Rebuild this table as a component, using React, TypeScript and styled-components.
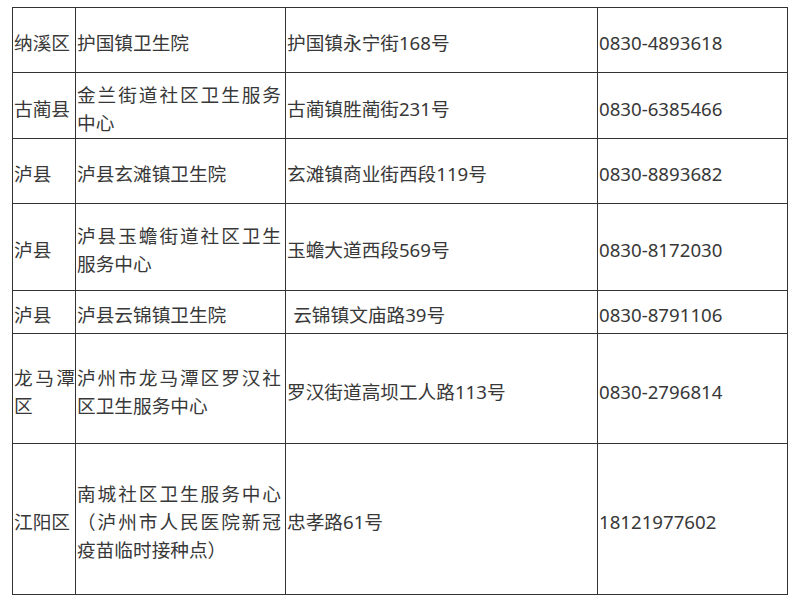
import React from "react";
import styled, { createGlobalStyle } from "styled-components";

const Global = createGlobalStyle`
  html, body { margin: 0; padding: 0; background: #fff; }
  body { font-family: "Noto Sans", "Noto Sans CJK SC", sans-serif; }
`;

const Page = styled.div`
  padding: 7px 0 0 12px;
`;

const Table = styled.table`
  border-collapse: collapse;
  table-layout: fixed;
  width: 776px;
  color: #383838;
  font-size: 18.67px;
  line-height: 28px;
`;

const Col = styled.col<{ $w: number }>`
  width: ${(p) => p.$w}px;
`;

const Row = styled.tr<{ $h: number }>`
  height: ${(p) => p.$h}px;
`;

const Cell = styled.td<{ $pr?: number }>`
  border: 1px solid #333;
  padding: 6px ${(p) => p.$pr ?? 2}px 0 1px;
  vertical-align: middle;
  text-align: justify;
  word-break: break-all;
  overflow: hidden;
`;

type R = { h: number; a: string; b: string; c: string; d: string };

const widths = [63, 210, 312, 190];

const rows: R[] = [
  { h: 65, a: "纳溪区", b: "护国镇卫生院", c: "护国镇永宁街168号", d: "0830-4893618" },
  { h: 66, a: "古蔺县", b: "金兰街道社区卫生服务中心", c: "古蔺镇胜蔺街231号", d: "0830-6385466" },
  { h: 65, a: "泸县", b: "泸县玄滩镇卫生院", c: "玄滩镇商业街西段119号", d: "0830-8893682" },
  { h: 87, a: "泸县", b: "泸县玉蟾街道社区卫生服务中心", c: "玉蟾大道西段569号", d: "0830-8172030" },
  { h: 43, a: "泸县", b: "泸县云锦镇卫生院", c: "\u2004云锦镇文庙路39号", d: "0830-8791106" },
  { h: 110, a: "龙马潭区", b: "泸州市龙马潭区罗汉社区卫生服务中心", c: "罗汉街道高坝工人路113号", d: "0830-2796814" },
  {
    h: 151,
    a: "江阳区",
    b: "南城社区卫生服务中心（泸州市人民医院新冠疫苗临时接种点）",
    c: "忠孝路61号",
    d: "18121977602",
  },
];

export default function App() {
  return (
    <>
      <Global />
      <Page>
        <Table>
          <colgroup>
            {widths.map((w, i) => (
              <Col key={i} $w={w} />
            ))}
          </colgroup>
          <tbody>
            {rows.map((r, i) => (
              <Row key={i} $h={r.h}>
                <Cell $pr={0}>{r.a}</Cell>
                <Cell $pr={4}>{r.b}</Cell>
                <Cell>{r.c}</Cell>
                <Cell>{r.d}</Cell>
              </Row>
            ))}
          </tbody>
        </Table>
      </Page>
    </>
  );
}
